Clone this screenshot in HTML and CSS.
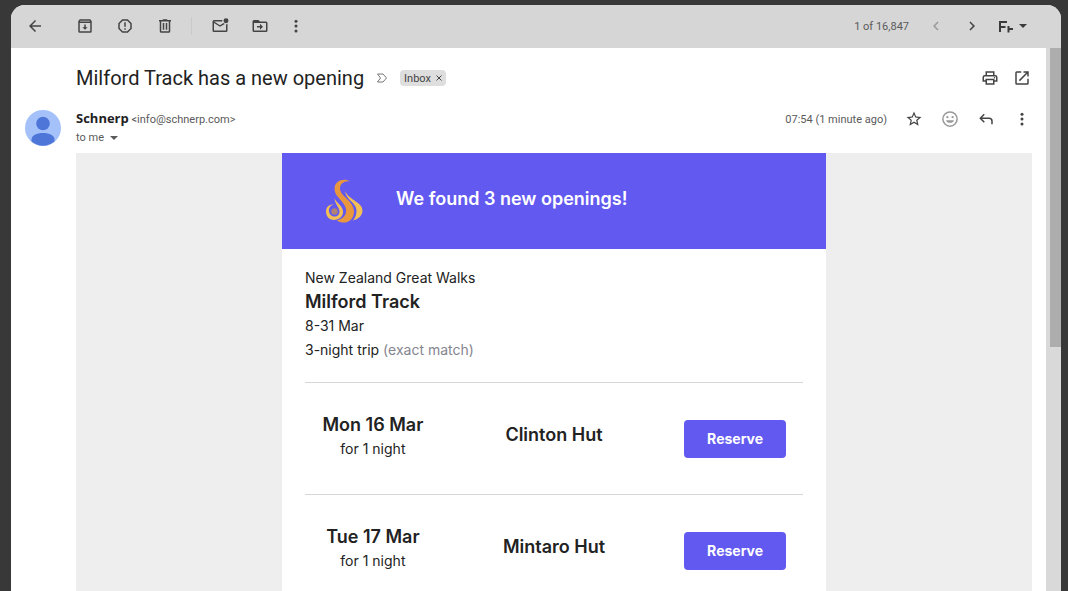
FILE: index.html
```html
<!DOCTYPE html>
<html lang="en">

<head>
    <meta charset="UTF-8">
    <meta name="viewport" content="width=device-width, initial-scale=1.0">
    <title>Milford Track has a new opening</title>
    <link rel="stylesheet" href="styles.css">
</head>

<body>
    <div class="window">
        <header class="toolbar">
            <button class="icon-btn back" type="button" aria-label="Back">
                <svg viewBox="0 0 24 24"><path d="M20 11H7.8l5.6-5.6L12 4l-8 8 8 8 1.4-1.4L7.8 13H20z"/></svg>
            </button>
            <button class="icon-btn" type="button" aria-label="Archive">
                <svg viewBox="0 0 24 24"><path fill-rule="evenodd" d="M5 3h14l2 2.5V19a2 2 0 0 1-2 2H5a2 2 0 0 1-2-2V5.500zM5 8v11h14V8zM5.800 5l-.6 1h13.600L18 5zM11 10h2v3.500h2.500L12 17l-3.500-3.500H11z"/></svg>
            </button>
            <button class="icon-btn" type="button" aria-label="Report spam">
                <svg viewBox="0 0 24 24"><path fill-rule="evenodd" d="M8.300 3h7.400L21 8.300v7.400L15.700 21H8.300L3 15.700V8.300zM9.100 5L5 9.100v5.800L9.100 19h5.800l4.100-4.100V9.100L14.900 5zM11 7h2v6h-2zM11 15h2v2h-2z"/></svg>
            </button>
            <button class="icon-btn" type="button" aria-label="Delete">
                <svg viewBox="0 0 24 24"><path fill-rule="evenodd" d="M15 4V3H9v1H4v2h1v13a2 2 0 0 0 2 2h10a2 2 0 0 0 2-2V6h1V4zM7 6h10v13H7zM9 8h2v9H9zM13 8h2v9h-2z"/></svg>
            </button>
            <span class="divider"></span>
            <button class="icon-btn" type="button" aria-label="Mark as unread">
                <svg viewBox="0 0 24 24"><path fill-rule="evenodd" d="M22 9v9a2 2 0 0 1-2 2H4a2 2 0 0 1-2-2V6a2 2 0 0 1 2-2h11.100a5 5 0 0 0 0 2H4l8 5 4.700-2.900a5 5 0 0 0 1.700 1.300L12 13 4 8v10h16V9.900A5 5 0 0 0 22 9z"/><circle cx="20" cy="5" r="3.300"/></svg>
            </button>
            <button class="icon-btn" type="button" aria-label="Move to">
                <svg viewBox="0 0 24 24"><path fill-rule="evenodd" d="M20 6h-8l-2-2H4a2 2 0 0 0-2 2v12a2 2 0 0 0 2 2h16a2 2 0 0 0 2-2V8a2 2 0 0 0-2-2zM4 8h16v10H4zM12 9l4 4-4 4v-3H8v-2h4z"/></svg>
            </button>
            <button class="icon-btn narrow" type="button" aria-label="More">
                <svg viewBox="0 0 24 24"><circle cx="12" cy="5.500" r="2"/><circle cx="12" cy="12" r="2"/><circle cx="12" cy="18.500" r="2"/></svg>
            </button>

            <span class="counter">1 of 16,847</span>
            <button class="icon-btn faded" type="button" aria-label="Newer" disabled>
                <svg viewBox="0 0 24 24"><path d="M15.400 7.400L14 6l-6 6 6 6 1.400-1.400L10.800 12z"/></svg>
            </button>
            <button class="icon-btn" type="button" aria-label="Older">
                <svg viewBox="0 0 24 24"><path d="M8.600 16.600L10 18l6-6-6-6-1.400 1.400 4.600 4.600z"/></svg>
            </button>
            <button class="input-tools" type="button" aria-label="Input tools">
                <svg class="input-mark" viewBox="0 0 16 14"><path d="M2 13V3h7M2 8h5.500M10.500 7v6.500M10.500 10H15"/></svg>
                <svg class="caret" viewBox="0 0 8 4"><path d="M0 0h8L4 4z"/></svg>
            </button>
        </header>

        <div class="pane">
            <main class="mail">
                <div class="subject-row">
                    <h1>Milford Track has a new opening</h1>
                    <svg class="importance" viewBox="0 0 12 10"><path d="M1.500 1h5.500l3.500 4L7 9H1.500l3-4z"/></svg>
                    <span class="label">Inbox <button type="button" aria-label="Remove label Inbox"><svg viewBox="0 0 6 6"><path d="M.5.5l5 5M5.500.5l-5 5"/></svg></button></span>
                    <div class="actions">
                        <button class="icon-btn narrow" type="button" aria-label="Print">
                            <svg viewBox="0 0 24 24"><path fill-rule="evenodd" d="M19 8h-1V3H6v5H5a3 3 0 0 0-3 3v6h4v4h12v-4h4v-6a3 3 0 0 0-3-3zM8 5h8v3H8zM16 19H8v-4h8zM18 15v-2H6v2H4v-4a1 1 0 0 1 1-1h14a1 1 0 0 1 1 1v4z"/><circle cx="18" cy="11.500" r="1"/></svg>
                        </button>
                        <button class="icon-btn narrow" type="button" aria-label="Open in new window">
                            <svg viewBox="0 0 24 24"><path d="M19 19H5V5h6V3H5a2 2 0 0 0-2 2v14a2 2 0 0 0 2 2h14a2 2 0 0 0 2-2v-6h-2zM14 3v2h3.600l-9.800 9.800 1.400 1.400L19 6.400V10h2V3z"/></svg>
                        </button>
                    </div>
                </div>

                <div class="sender-row">
                    <svg class="avatar" viewBox="0 0 36 36">
                        <circle cx="18" cy="18" r="18" fill="#a5c1fa"/>
                        <circle cx="18" cy="13.500" r="6.800" fill="#4e76d9"/>
                        <path d="M6.500 31.500v-2c0-4 5-6.500 11.500-6.500s11.500 2.500 11.500 6.500v2A18 18 0 0 1 6.500 31.500z" fill="#4e76d9"/>
                    </svg>
                    <div class="sender">
                        <div><strong>Schnerp</strong> <span class="address">&lt;info@schnerp.com&gt;</span></div>
                        <button class="recipient" type="button">to me <svg class="caret" viewBox="0 0 8 4"><path d="M0 0h8L4 4z"/></svg></button>
                    </div>
                    <div class="actions">
                        <span class="time">07:54 (1 minute ago)</span>
                        <button class="icon-btn" type="button" aria-label="Star">
                            <svg viewBox="0 0 24 24"><path fill-rule="evenodd" d="M22 9.200l-7.200-.6L12 2 9.200 8.600 2 9.200l5.500 4.800L5.800 21l6.200-3.700 6.200 3.700-1.600-7zM12 15.400l-3.800 2.300 1-4.300-3.300-2.900 4.400-.4L12 6.100l1.700 4 4.400.4-3.300 2.900 1 4.300z"/></svg>
                        </button>
                        <button class="icon-btn smile" type="button" aria-label="Add reaction">
                            <svg viewBox="0 0 24 24"><circle class="ring" cx="12" cy="12" r="9.500"/><circle cx="8.500" cy="9.500" r="1.500"/><circle cx="15.500" cy="9.500" r="1.500"/><path d="M6.800 13.500h10.400a5.300 4.500 0 0 1-10.400 0z"/></svg>
                        </button>
                        <button class="icon-btn" type="button" aria-label="Reply">
                            <svg viewBox="0 0 24 24"><path d="M6.800 10l3.600-3.600L9 5l-6 6 6 6 1.400-1.400L6.800 12H16a3 3 0 0 1 3 3v4h2v-4a5 5 0 0 0-5-5z"/></svg>
                        </button>
                        <button class="icon-btn" type="button" aria-label="More">
                            <svg viewBox="0 0 24 24"><circle cx="12" cy="5.500" r="2"/><circle cx="12" cy="12" r="2"/><circle cx="12" cy="18.500" r="2"/></svg>
                        </button>
                    </div>
                </div>

                <div class="message">
                    <article class="card">
                        <div class="banner">
                            <svg class="flame" viewBox="0 0 38 44">
                                <path fill="#e9973e" d="M25 2.500C20-1 9.500 1 9.500 10c0 8 10 12 11.500 20 1 6-3 10-9 11.500 6 4.500 17 2 17-9 0-11-14-15-14-23 0-5 4.500-8 10-7z"/>
                                <path fill="#f3bf55" d="M20 12c1 9 11 11.500 11.500 19 .2 4-1 7.500-3.500 10.500 6-1.500 9.500-5.500 9.500-10C37.500 23 24 21 20 12z"/>
                                <path fill="#f3bf55" d="M9.500 19c1 4 8 7.500 8.500 13 .5 5.500-4 9-9 9-5 0-8-4-8-8.500S4 25 9 25.500c-4 1-5.500 4-5 7 .5 3.500 3 5 5.500 5 3 0 5-2 5-5 0-4-5-8-5-13.500z"/>
                                <circle cx="9.500" cy="32.500" r="3.200" fill="#b08273"/>
                            </svg>
                            <h2>We found 3 new openings!</h2>
                        </div>
                        <div class="content">
                            <div class="trip">
                                <p>New Zealand Great Walks</p>
                                <h3>Milford Track</h3>
                                <p>8-31 Mar</p>
                                <p>3-night trip <span class="match">(exact match)</span></p>
                            </div>
                            <ul class="openings">
                                <li>
                                    <div class="date">
                                        <h3>Mon 16 Mar</h3>
                                        <p>for 1 night</p>
                                    </div>
                                    <h3 class="hut">Clinton Hut</h3>
                                    <a class="reserve" href="#">Reserve</a>
                                </li>
                                <li>
                                    <div class="date">
                                        <h3>Tue 17 Mar</h3>
                                        <p>for 1 night</p>
                                    </div>
                                    <h3 class="hut">Mintaro Hut</h3>
                                    <a class="reserve" href="#">Reserve</a>
                                </li>
                            </ul>
                        </div>
                    </article>
                </div>
            </main>
            <div class="scrollbar"><div class="thumb"></div></div>
        </div>
    </div>
</body>

</html>
```

FILE: styles.css
```css
* {
    box-sizing: border-box;
}

body {
    margin: 0;
    height: 100vh;
    padding: 5px 7px 0 11px;
    background: #383838;
    font-family: Roboto, sans-serif;
    font-size: 11px;
    color: #5a5a5a;
    overflow: hidden;
}

h1, h2, h3, p, ul {
    margin: 0;
    padding: 0;
}

button {
    border: 0;
    padding: 0;
    background: none;
    font: inherit;
    color: inherit;
    cursor: pointer;
}

svg {
    display: block;
    flex: none;
    fill: currentColor;
}

.window {
    display: flex;
    flex-direction: column;
    height: 100%;
    background: #fff;
    border-radius: 14px 14px 0 0;
    overflow: hidden;
}

.toolbar {
    display: flex;
    align-items: center;
    flex: none;
    height: 43px;
    padding: 0 34px 1px 6px;
    background: #d6d6d6;
}

.icon-btn {
    display: flex;
    align-items: center;
    justify-content: center;
    width: 36px;
    height: 36px;
    color: #444;
}

.icon-btn svg {
    width: 18px;
    height: 18px;
}

.toolbar .icon-btn {
    width: 40px;
}

.toolbar .back {
    width: 36px;
    margin-right: 12px;
}

.icon-btn.narrow,
.toolbar .narrow {
    width: 32px;
}

.divider {
    width: 1px;
    height: 18px;
    margin: 0 8px 0 6px;
    background: #cacaca;
}

.counter {
    margin-left: auto;
    margin-right: 9px;
}

.toolbar .counter ~ .icon-btn {
    width: 36px;
}

.icon-btn.faded {
    color: #999;
}

.input-tools {
    display: flex;
    align-items: center;
    gap: 5px;
    margin-left: 8px;
    color: #3a3a3a;
}

.input-mark {
    width: 16px;
    height: 14px;
    fill: none;
    stroke: currentColor;
    stroke-width: 2;
}

.caret {
    width: 8px;
    height: 4px;
}

.pane {
    display: flex;
    flex: 1;
    min-height: 0;
}

.mail {
    display: flex;
    flex-direction: column;
    flex: 1;
    min-width: 0;
    padding: 12px 14px 0;
}

.subject-row {
    display: flex;
    align-items: center;
    flex: none;
    height: 36px;
    padding-left: 51px;
}

.subject-row h1 {
    font-size: 20px;
    font-weight: 400;
    line-height: 28px;
    color: #222;
}

.importance {
    width: 12px;
    height: 10px;
    margin: 0 12px;
    fill: none;
    stroke: #777;
}

.label {
    display: flex;
    align-items: center;
    gap: 5px;
    height: 16px;
    padding: 0 4px;
    border-radius: 4px;
    background: #dedede;
    color: #444;
}

.label svg {
    width: 6px;
    height: 6px;
    stroke: currentColor;
}

.actions {
    display: flex;
    align-items: center;
    margin-left: auto;
    margin-right: -8px;
}

.subject-row .actions {
    margin-right: -6px;
}

.sender-row {
    display: flex;
    align-items: flex-start;
    flex: none;
    height: 57px;
}

.avatar {
    width: 36px;
    height: 36px;
    margin: 14px 15px 0 0;
}

.sender {
    padding-top: 13px;
    line-height: 18px;
}

.sender strong {
    font-family: "Open Sans", sans-serif;
    font-size: 13px;
    color: #222;
}

.recipient {
    display: flex;
    align-items: center;
    gap: 6px;
}

.sender-row .actions {
    padding-top: 5px;
}

.time {
    margin-right: 9px;
}

.smile {
    color: #999;
}

.smile .ring {
    fill: none;
    stroke: currentColor;
    stroke-width: 2;
}

.message {
    flex: 1;
    display: flex;
    justify-content: center;
    min-height: 0;
    margin-left: 51px;
    background: #eee;
    font-family: Inter, sans-serif;
    font-size: 14px;
    line-height: 24px;
    color: #222;
}

.card {
    width: 100%;
    max-width: 544px;
    background: #fff;
}

.banner {
    display: flex;
    align-items: center;
    gap: 33px;
    height: 96px;
    padding: 0 43px;
    background: #6259f0;
    color: #fff;
}

.banner h2 {
    padding-bottom: 4px;
    font-size: 18px;
    font-weight: 600;
    line-height: 24px;
}

.flame {
    width: 38px;
    height: 44px;
}

.content {
    padding: 17px 23px 0;
}

.content h3 {
    font-size: 18px;
    font-weight: 600;
    line-height: 24px;
}

.trip {
    padding-bottom: 20px;
}

.match {
    color: #85858f;
}

.openings {
    list-style: none;
}

.openings li {
    display: grid;
    grid-template-columns: 3fr 5fr 3fr;
    align-items: center;
    min-height: 112px;
    border-top: 1px solid #d6d6d8;
    text-align: center;
}

.date {
    padding-bottom: 4px;
}

.openings .hut {
    padding-bottom: 8px;
}

.reserve {
    justify-self: center;
    padding: 7px 23px;
    border-radius: 4px;
    background: #6259f0;
    font-weight: 700;
    color: #fff;
    text-decoration: none;
}

.scrollbar {
    flex: none;
    width: 15px;
    padding-left: 4px;
    background: #d9d9d9;
}

.thumb {
    height: 55%;
    background: #adadad;
}
```
